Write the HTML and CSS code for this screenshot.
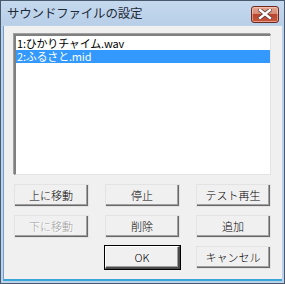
FILE: index.html
```html
<!DOCTYPE html>
<html lang="ja">
<head>
<meta charset="utf-8">
<title>サウンドファイルの設定</title>
<link rel="stylesheet" href="styles.css">
</head>
<body>
<div class="window">
  <div class="titlebar">
    <span class="title">サウンドファイルの設定</span>
    <button class="close" aria-label="閉じる">
      <svg width="14" height="10" viewBox="0 0 14 10">
        <path d="M2 1 L12 9 M12 1 L2 9" stroke="#5a3a36" stroke-width="4" stroke-linecap="square"/>
        <path d="M2 1 L12 9 M12 1 L2 9" stroke="#ffffff" stroke-width="2.4" stroke-linecap="square"/>
      </svg>
    </button>
  </div>
  <div class="client">
    <div class="listbox">
      <div class="item">1:ひかりチャイム.wav</div>
      <div class="item selected">2:ふるさと.mid</div>
    </div>
    <div class="buttons">
      <button class="btn">上に移動</button>
      <button class="btn">停止</button>
      <button class="btn">テスト再生</button>
      <button class="btn disabled">下に移動</button>
      <button class="btn">削除</button>
      <button class="btn">追加</button>
      <span></span>
      <button class="btn default">OK</button>
      <button class="btn">キャンセル</button>
    </div>
  </div>
</div>
</body>
</html>
```
FILE: styles.css
```css
html, body {
  margin: 0;
  padding: 0;
  background: #ffffff;
}
.window {
  width: 285px;
  height: 284px;
  box-sizing: border-box;
  border: 1px solid #4a5a6e;
  background: #bcd2ea;
  display: flex;
  flex-direction: column;
  font-family: "Noto Sans CJK JP", "Noto Sans", sans-serif;
}
.titlebar {
  height: 24px;
  display: flex;
  align-items: center;
  justify-content: space-between;
  padding: 0 5px 0 6px;
  background: linear-gradient(#c5d9ee, #b8cfe8);
}
.title {
  font-size: 12.5px;
  font-weight: 400;
  color: #1e2a38;
  letter-spacing: -0.2px;
  line-height: 14px;
}
.close {
  width: 28px;
  height: 17px;
  margin-top: 2px;
  padding: 0;
  border: 1px solid #6e2a20;
  border-radius: 3px;
  background: linear-gradient(#e5a693 0%, #d88a75 45%, #b9452f 50%, #c7583f 100%);
  display: flex;
  align-items: center;
  justify-content: center;
  box-shadow: inset 0 0 0 1px rgba(255,220,200,0.5);
}
.client {
  flex: 1;
  margin: 1px 2px 2px 2px;
  background: #f0f0f0;
  border-bottom: 2px solid #3aa6d8;
  border-left: 1px solid #6fa0d0;
  padding: 8px 0 0 10px;
}
.listbox {
  width: 257px;
  height: 141px;
  box-sizing: border-box;
  background: #ffffff;
  border-top: 2px solid #808080;
  border-left: 2px solid #808080;
  border-right: 1px solid #e3e3e3;
  border-bottom: 1px solid #e3e3e3;
  box-shadow: -1px -1px 0 #a0a0a0;
  padding: 1px 0 0 0;
  font-size: 11px;
  font-weight: 400;
  line-height: 13px;
}
.item {
  height: 13px;
  padding-left: 1px;
  color: #000;
  white-space: nowrap;
  letter-spacing: -0.2px;
}
.item.selected {
  background: #3399ff;
  color: #ffffff;
}
.buttons {
  margin-top: 9px;
  display: grid;
  grid-template-columns: 75px 75px 75px;
  grid-auto-rows: 23px;
  column-gap: 16px;
  row-gap: 8px;
}
.btn {
  margin: 0;
  padding: 0;
  font-family: "Noto Sans CJK JP", "Noto Sans", sans-serif;
  font-size: 11px;
  font-weight: 300;
  color: #000;
  background: #f0f0f0;
  border-style: solid;
  border-width: 1px 2px 2px 1px;
  border-color: #ffffff #696969 #696969 #ffffff;
  box-shadow: inset -1px -1px 0 #a0a0a0;
  outline: 1px solid #e3e3e3;
  outline-offset: -1px;
}
.btn.default {
  border-color: #ffffff #4a4a4a #4a4a4a #ffffff;
  box-shadow: 0 0 0 1px #000000, inset -1px -1px 0 #a0a0a0;
  outline: none;
}
.btn.disabled {
  color: #a0a0a0;
  text-shadow: 1px 1px 0 #ffffff;
}
```
